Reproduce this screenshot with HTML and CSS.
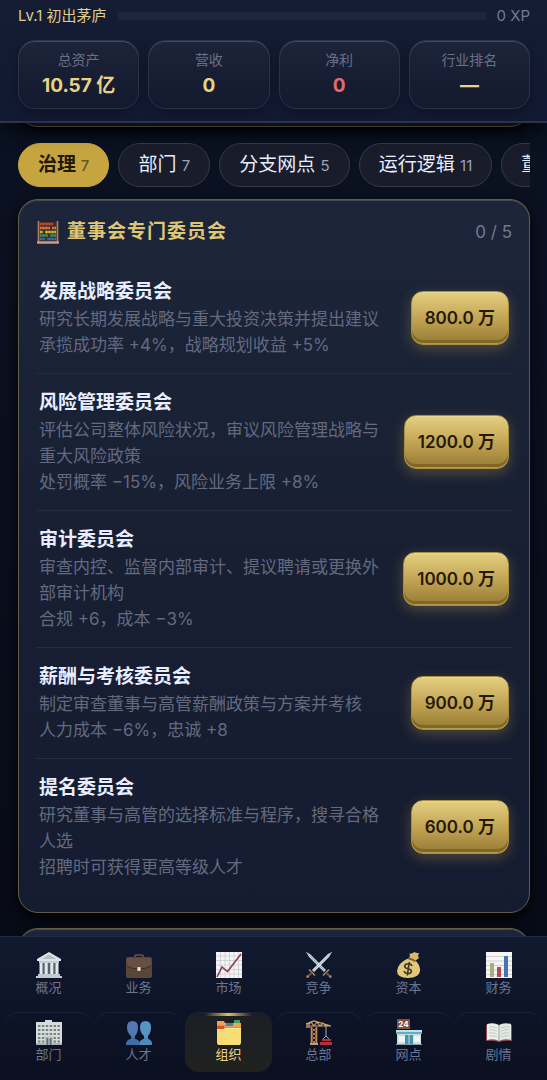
FILE: index.html
```html
<!DOCTYPE html>
<html lang="zh-CN">
<head>
    <meta charset="UTF-8">
    <meta name="viewport" content="width=device-width, initial-scale=1.0">
    <title>组织</title>
    <link rel="stylesheet" href="styles.css">
</head>
<body>
    <div class="app">
        <header class="topbar">
            <div class="level">
                <span class="level-name">Lv.1 初出茅庐</span>
                <div class="level-track"></div>
                <span class="level-xp">0 XP</span>
            </div>
            <div class="stats">
                <div class="stat"><span class="stat-label">总资产</span><strong class="stat-value">10.57 亿</strong></div>
                <div class="stat"><span class="stat-label">营收</span><strong class="stat-value">0</strong></div>
                <div class="stat"><span class="stat-label">净利</span><strong class="stat-value negative">0</strong></div>
                <div class="stat"><span class="stat-label">行业排名</span><strong class="stat-value">—</strong></div>
            </div>
        </header>

        <main class="content">
            <section class="panel panel-prev"></section>

            <div class="chips">
                <button class="chip active">治理 <small>7</small></button>
                <button class="chip">部门 <small>7</small></button>
                <button class="chip">分支网点 <small>5</small></button>
                <button class="chip">运行逻辑 <small>11</small></button>
                <button class="chip">董</button>
            </div>

            <section class="panel">
                <div class="panel-head">
                    <svg class="panel-icon" viewBox="0 0 22 24">
                        <path d="M2 2h18v20H2z" fill="#3d2d2c"/>
                        <path d="M3 4h13" stroke="#cf453c" stroke-width="2.6"/>
                        <path d="M3 8h10M15 8h4" stroke="#df8230" stroke-width="2.6"/>
                        <path d="M3 12h3M8 12h11" stroke="#dcb93a" stroke-width="2.6"/>
                        <path d="M3 15.5h8M13 15.5h6" stroke="#3f9a4e" stroke-width="2.6"/>
                        <path d="M3 19h5M10 19h9" stroke="#2f6fc4" stroke-width="2.6"/>
                        <path d="M5 2v19M8 2v19M11 2v19M14 2v19M17 2v19" stroke="#3d2d2c" stroke-width=".5"/>
                        <path d="M1.500 1v21M20.500 1v21" stroke="#b67f60" stroke-width="1.600"/>
                        <path d="M0 22.500h22" stroke="#d3a07c" stroke-width="2.400"/>
                    </svg>
                    <h2>董事会专门委员会</h2>
                    <span class="panel-count">0 / 5</span>
                </div>

                <div class="item">
                    <div class="item-text">
                        <h3>发展战略委员会</h3>
                        <p>研究长期发展战略与重大投资决策并提出建议</p>
                        <p>承揽成功率 +4%，战略规划收益 +5%</p>
                    </div>
                    <button class="buy">800.0 万</button>
                </div>
                <div class="item">
                    <div class="item-text">
                        <h3>风险管理委员会</h3>
                        <p>评估公司整体风险状况，审议风险管理战略与重大风险政策</p>
                        <p>处罚概率 −15%，风险业务上限 +8%</p>
                    </div>
                    <button class="buy">1200.0 万</button>
                </div>
                <div class="item">
                    <div class="item-text">
                        <h3>审计委员会</h3>
                        <p>审查内控、监督内部审计、提议聘请或更换外部审计机构</p>
                        <p>合规 +6，成本 −3%</p>
                    </div>
                    <button class="buy">1000.0 万</button>
                </div>
                <div class="item">
                    <div class="item-text">
                        <h3>薪酬与考核委员会</h3>
                        <p>制定审查董事与高管薪酬政策与方案并考核</p>
                        <p>人力成本 −6%，忠诚 +8</p>
                    </div>
                    <button class="buy">900.0 万</button>
                </div>
                <div class="item">
                    <div class="item-text">
                        <h3>提名委员会</h3>
                        <p>研究董事与高管的选择标准与程序，搜寻合格人选</p>
                        <p>招聘时可获得更高等级人才</p>
                    </div>
                    <button class="buy">600.0 万</button>
                </div>
            </section>

            <section class="panel panel-next"></section>
        </main>

        <nav class="tabbar">
            <button class="tab">
                <svg viewBox="0 0 26 26">
                    <path d="M13 0 25 7v2H1V7z" fill="#dce3e6"/>
                    <path d="M13 2.5 20 7H6z" fill="#b3bec5"/>
                    <path d="M3 9h20v2H3zM2 22h22v2H2zM0 24h26v2H0z" fill="#c1cbd0"/>
                    <path d="M4 11h18v11H4z" fill="#56636f"/>
                    <path d="M3.5 11h3v11h-3zM8.7 11h3v11h-3zM14.3 11h3v11h-3zM19.5 11h3v11h-3z" fill="#e3e9eb"/>
                </svg>
                <span>概况</span>
            </button>
            <button class="tab">
                <svg viewBox="0 0 26 26">
                    <path d="M9 6V4q0-1 1-1h6q1 0 1 1v2" fill="none" stroke="#6a5545" stroke-width="1.6"/>
                    <rect y="5" width="26" height="21" rx="2" fill="#59463a"/>
                    <path d="M1 7q0-1 1-1h22q1 0 1 1v7q-5 3-12 3T1 14z" fill="#665042"/>
                    <path d="M1 14q5 3 12 3t12-3" fill="none" stroke="#3a2d26"/>
                    <rect x="11.3" y="15" width="3.4" height="4" rx="1" fill="#e7dcc0"/>
                </svg>
                <span>业务</span>
            </button>
            <button class="tab">
                <svg viewBox="0 0 26 26">
                    <path d="M0 0h26v26H0z" fill="#f4f4f4"/>
                    <path d="M4.5 0v26M9 0v26M13.5 0v26M18 0v26M22.5 0v26M0 4h26M0 8.5h26M0 13h26M0 17.5h26M0 22h26" stroke="#c4c8cd" stroke-width=".7"/>
                    <path d="M1 25 6 15l5.500 4.500L25 2" fill="none" stroke="#8d4049" stroke-width="1.6"/>
                </svg>
                <span>市场</span>
            </button>
            <button class="tab">
                <svg viewBox="0 0 26 26">
                    <path d="M0 0l4 2 16 16-2 2L3 5z" fill="#c3d6e2"/>
                    <path d="M0 0l19 19" stroke="#7d98ab" stroke-width=".8"/>
                    <path d="M26 0l-4 2L6 18l2 2L23 5z" fill="#dce9ef"/>
                    <path d="M26 0 7 19" stroke="#8fa8b8" stroke-width=".8"/>
                    <path d="M3 17.5l6 6M23 17.5l-6 6" stroke="#a58c62" stroke-width="1.6"/>
                    <path d="M6 20.5 2 24.500M20 20.500l4 4" stroke="#6f4f3c" stroke-width="2.2"/>
                    <circle cx="1.6" cy="24.6" r="1.300" fill="#a98b5c"/>
                    <circle cx="24.4" cy="24.6" r="1.300" fill="#a98b5c"/>
                </svg>
                <span>竞争</span>
            </button>
            <button class="tab">
                <svg viewBox="0 0 26 26">
                    <path d="M13 7l1-4-1-1 4-1 1-1 3 1 2 0-1 3 1 2-4 3z" fill="#d9b962"/>
                    <path d="M11 7q5-2 9 2 4.500 5 4 10-1 7-12 7T1 19Q2 11 11 7z" fill="#e0c779"/>
                    <path d="M12.500 6.500q4 .5 7 3" fill="none" stroke="#86622f" stroke-width="1.800"/>
                    <path d="M16 14q-.5-2-3.500-2.200-3.500 0-3.800 2.200 0 2 3.300 2.700 3.800.8 3.300 3-.5 2-3.800 1.800-3-.2-3.300-2.500M13.300 10l-2 13.500" fill="none" stroke="#3d372b" stroke-width="1.600"/>
                </svg>
                <span>资本</span>
            </button>
            <button class="tab">
                <svg viewBox="0 0 26 26">
                    <path d="M0 0h26v26H0z" fill="#f5f6f3"/>
                    <path d="M0 4.5h26M0 9h26M0 13.5h26M0 18h26M0 22.5h26" stroke="#c4c7c8" stroke-width=".8"/>
                    <path d="M4 11h4v14H4z" fill="#a6b27b"/>
                    <path d="M11 15h4v10h-4z" fill="#b34a52"/>
                    <path d="M18 4h4v21h-4z" fill="#4774ad"/>
                </svg>
                <span>财务</span>
            </button>
            <button class="tab lower">
                <svg viewBox="0 0 26 26">
                    <path d="M9 1h7v3H9zM0 3h26v22H0z" fill="#d6dcda"/>
                    <path d="M0 24h26v2H0z" fill="#a9b2b1"/>
                    <path d="M2 7h22M2 11h22M2 15h22M2 19h22M2 22.500h22" stroke="#76827f" stroke-width="1.8" stroke-dasharray="2.400 1.500"/>
                    <path d="M9 17h8v9H9z" fill="#b9c4c1"/>
                    <path d="M10.5 19h5v7h-5z" fill="#5f6d6a"/>
                    <path d="M13 18v8" stroke="#dae0de"/>
                </svg>
                <span>部门</span>
            </button>
            <button class="tab lower">
                <svg viewBox="0 0 26 26">
                    <path d="M13 26q0-5 5-6v-3q-4-3-4-9 0-6 5.500-6T25 8q0 6-3 9v3q4 1 4 6z" fill="#5594c5"/>
                    <path d="M0 26q0-5 5-6v-3Q1 14 1 8q0-6 5.500-6T12 8q0 6-3 9v3q5 1 5 6z" fill="#5279b4"/>
                    <path d="M0 26q0-5 5-6v-3q2 2 4 0v3q5 1 5 6z" fill="#416da6"/>
                    <path d="M14 26q0-5 4-6v-3q2 2 4 0v3q4 1 4 6z" fill="#4b8abb"/>
                </svg>
                <span>人才</span>
            </button>
            <button class="tab lower active">
                <svg viewBox="0 0 26 26">
                    <path d="M18 1h6v3h-6z" fill="#4d9b65"/>
                    <path d="M1 2h7l1 2h16v6H1z" fill="#eba350"/>
                    <path d="M10 4h7v3h-7z" fill="#4a7fa5"/>
                    <path d="M1 6h8l1 2h15v3H1z" fill="#e08a49"/>
                    <path d="M1 7h7v3H1z" fill="#da4c35"/>
                    <path d="M1 10h7l1-1h16v15l-1 2H2l-1-2z" fill="#f6dc74"/>
                    <path d="M1 10.500h7l1-1h16" fill="none" stroke="#ffed9b"/>
                </svg>
                <span>组织</span>
            </button>
            <button class="tab lower">
                <svg viewBox="0 0 26 26">
                    <path d="M0 5 8 2l17 5H0M2 6l3-3 3 4 3-4 3 4 3-3 3 3 3-1" fill="none" stroke="#d0a06a" stroke-width="1.2"/>
                    <path d="M0 5h4v4H0z" fill="#987255"/>
                    <path d="M5.500 8v17M10.500 8v17" stroke="#c28b55" stroke-width="1.600"/>
                    <path d="M5.500 9l5 4-5 4 5 4-5 4M10.500 9l-5 4 5 4-5 4 5 4" fill="none" stroke="#c28b55"/>
                    <path d="M4 24h8v2H4z" fill="#c19b75"/>
                    <path d="M20 7v10l-4 4M20 17l4 4" fill="none" stroke="#9baab4"/>
                    <path d="M16 20h9v2h-9zM14 23h12v3H14z" fill="#aa343a"/>
                </svg>
                <span>总部</span>
            </button>
            <button class="tab lower">
                <svg viewBox="0 0 26 26">
                    <path d="M1 11h24v14H1z" fill="#c9dfe1"/>
                    <path d="M0 11h26v4H0z" fill="#58b2c1"/>
                    <path d="M0 12h26" stroke="#e6eeee" stroke-width="1.500"/>
                    <path d="M3 17h6v6H3zM18 17h6v6h-6z" fill="#f0f5f3"/>
                    <path d="M9 16h8v9H9z" fill="#4196ad"/>
                    <path d="M13 16v9" stroke="#b5dfe2"/>
                    <path d="M0 25h26v1H0z" fill="#8b9da2"/>
                    <path d="M1 0h13v10H1z" fill="#84513f"/>
                    <text class="sign" x="7.5" y="8" text-anchor="middle">24</text>
                </svg>
                <span>网点</span>
            </button>
            <button class="tab lower">
                <svg viewBox="0 0 26 26">
                    <path d="M0 6q6-1 13 1 7-2 13-1v16q-7-1-13 1-6-2-13-1z" fill="#934d51"/>
                    <path d="M1 5q7-2 12 1v16q-5-3-12-1z" fill="#eceee9"/>
                    <path d="M25 5q-7-2-12 1v16q5-3 12-1z" fill="#e4e8e3"/>
                    <path d="M13 6v16" stroke="#89a99d"/>
                    <path d="M3 8q4-1 8 1M3 11q4-1 8 1M3 14q4-1 8 1M3 17q4-1 8 1M23 8q-4-1-8 1M23 11q-4-1-8 1M23 14q-4-1-8 1M23 17q-4-1-8 1" fill="none" stroke="#bac1bd" stroke-width=".8"/>
                </svg>
                <span>剧情</span>
            </button>
        </nav>
    </div>
</body>
</html>
```
FILE: styles.css
```css
* {
    margin: 0;
    padding: 0;
    box-sizing: border-box;
}

body {
    font-family: Inter, 'Noto Sans CJK SC', sans-serif;
    background: #05070d;
    color: #e8edff;
}

button {
    font-family: inherit;
    color: inherit;
    border: none;
    background: none;
    cursor: pointer;
}

.app {
    display: flex;
    flex-direction: column;
    height: 100vh;
    background: linear-gradient(180deg, #0b1222 0%, #0a0f1e 45%, #070a14 100%);
}

/* top bar */
.topbar {
    padding: 6px 17px 12px 18px;
    background: linear-gradient(180deg, #141d33 0%, #121932 100%);
    border-bottom: 2px solid #2b344b;
    box-shadow: 0 6px 18px rgba(0, 0, 0, 0.6);
    z-index: 1;
}

.level {
    display: flex;
    align-items: center;
    gap: 10px;
    height: 20px;
    margin-bottom: 14px;
    font-size: 15px;
    line-height: 20px;
}

.level-name {
    color: #e0cd8b;
}

.level-track {
    flex: 1;
    height: 8px;
    border-radius: 4px;
    background: #1f263a;
}

.level-xp {
    color: #737a92;
}

.stats {
    display: grid;
    grid-template-columns: repeat(4, 1fr);
    gap: 9px;
}

.stat {
    display: flex;
    flex-direction: column;
    align-items: center;
    padding: 8px 4px 7px;
    border: 1px solid #2a3247;
    border-radius: 17px;
    background: linear-gradient(180deg, #1c2439 0%, #13192e 100%);
    box-shadow: inset 0 1px 0 #454c61, 0 4px 12px rgba(0, 0, 0, 0.25);
}

.stat-label {
    font-size: 14px;
    line-height: 22px;
    color: #697089;
}

.stat-value {
    font-size: 19px;
    line-height: 30px;
    color: #e8d286;
}

.stat-value.negative {
    color: #e56a6c;
}

/* scrolling content */
.content {
    flex: 1;
    min-height: 0;
    padding: 0 17px 0 18px;
    overflow-x: hidden;
    overflow-y: auto;
    scrollbar-width: none;
}

.panel {
    padding: 17px;
    border: 1px solid #645c46;
    border-radius: 20px;
    background: linear-gradient(180deg, #1c2539 0%, #181f33 50%, #151b30 100%);
    box-shadow: inset 0 1px 0 #474a50, 0 5px 14px rgba(0, 0, 0, 0.8);
}

.panel-prev {
    height: 60px;
    margin-top: -56px;
}

.panel-next {
    height: 120px;
    margin-top: 15px;
}

.chips {
    display: flex;
    gap: 9px;
    margin: 16px 0 12px;
    overflow-x: auto;
    scrollbar-width: none;
}

.chip {
    flex: none;
    height: 44px;
    padding: 0 19px;
    border: 1px solid #363a48;
    border-radius: 22px;
    background: #181c2b;
    font-size: 19px;
    line-height: 28px;
}

.chip small {
    font-size: 15px;
    color: #9da2b3;
}

.chip.active {
    border-color: #c6a541;
    background: #c6a541;
    color: #201908;
    font-weight: 600;
}

.chip.active small {
    color: #68551f;
    font-weight: 500;
}

.panel-head {
    display: flex;
    align-items: center;
    gap: 8px;
    height: 30px;
    margin-bottom: 16px;
    padding-left: 1px;
}

.panel-icon {
    width: 22px;
    height: 24px;
}

.panel-head h2 {
    flex: 1;
    font-size: 19px;
    line-height: 28px;
    letter-spacing: 1px;
    color: #dfc675;
}

.panel-count {
    font-size: 17px;
    color: #747a8e;
}

.item {
    display: flex;
    align-items: center;
    gap: 20px;
    padding: 15px 3px;
    border-bottom: 1px solid #252c40;
}

.item:last-child {
    border-bottom: none;
}

.item-text {
    flex: 1;
}

.item h3 {
    font-size: 19px;
    line-height: 28px;
}

.item p {
    font-size: 17px;
    line-height: 26px;
    color: #636a80;
}

.buy {
    flex: none;
    height: 54px;
    padding: 0 13px 4px;
    border: 1px solid #a88d43;
    border-radius: 12px;
    background: linear-gradient(180deg, #e4cf80 0%, #bfa150 55%, #957a35 100%);
    box-shadow: inset 0 1px 0 #e9d792, inset 0 -1px 0 #b39a50, inset 0 -4px 0 #806723, 0 4px 14px rgba(207, 177, 78, 0.3);
    color: #251908;
    font-size: 17px;
    font-weight: 600;
}

/* bottom tabs */
.tabbar {
    display: grid;
    grid-template-columns: repeat(6, 1fr);
    gap: 7px 3px;
    padding: 8px 5px;
    border-top: 1px solid #222c43;
    background: linear-gradient(180deg, #121a30 0%, #0d1326 60%, #0b1020 100%);
    z-index: 1;
}

.tab {
    position: relative;
    display: flex;
    flex-direction: column;
    align-items: center;
    height: 60px;
    padding-top: 7px;
    border-radius: 14px;
    font-size: 13px;
    line-height: 18px;
    color: #6b7591;
}

.tab svg {
    width: 26px;
    height: 26px;
}

.tab.lower {
    box-shadow: inset 0 1px 0 #192136;
}

.tab.active {
    background: linear-gradient(180deg, #1c1e26 0%, #20211f 100%);
    color: #e8d286;
}

.tab.active::before {
    content: '';
    position: absolute;
    top: 1px;
    left: 20px;
    right: 20px;
    height: 3px;
    background: linear-gradient(90deg, transparent, #e3bf57, transparent);
}

.sign {
    font-size: 8px;
    font-weight: 700;
    fill: #ffffff;
}
```
